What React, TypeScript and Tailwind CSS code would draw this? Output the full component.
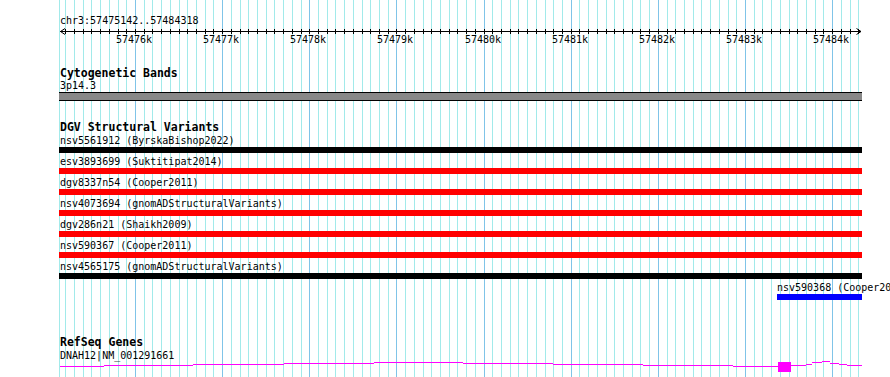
const START = 57475142
const END = 57484318
const X0 = 60.7
const SCALE = 0.08715

const toX = (bp: number) => X0 + (bp - START) * SCALE

type Tick = { bp: number; x: number; major: boolean }

const ticks: Tick[] = []
for (let bp = 57475200; bp <= END; bp += 100) {
  ticks.push({ bp, x: Math.floor(toX(bp)), major: bp % 1000 === 0 })
}

const variants = [
  { name: 'nsv5561912 (ByrskaBishop2022)', color: 'bg-black' },
  { name: 'esv3893699 (Suktitipat2014)', color: 'bg-[#ff0000]' },
  { name: 'dgv8337n54 (Cooper2011)', color: 'bg-[#ff0000]' },
  { name: 'nsv4073694 (gnomADStructuralVariants)', color: 'bg-[#ff0000]' },
  { name: 'dgv286n21 (Shaikh2009)', color: 'bg-[#ff0000]' },
  { name: 'nsv590367 (Cooper2011)', color: 'bg-[#ff0000]' },
  { name: 'nsv4565175 (gnomADStructuralVariants)', color: 'bg-black' },
]

// intron line of the gene, drawn as 1px steps: [x1, x2, row]
const intron: [number, number, number][] = [
  [60, 104, 366], [104, 193, 365], [193, 284, 364], [284, 374, 363],
  [374, 463, 362], [463, 553, 363], [553, 643, 364], [643, 733, 365],
  [733, 778, 366], [791, 806, 365], [806, 812, 364], [812, 822, 362],
  [822, 830, 361], [830, 839, 363], [839, 847, 364], [847, 862, 365],
]

const mono = "font-['DejaVu_Sans_Mono',monospace]"

function Grid() {
  return (
    <svg className="absolute inset-0" width={890} height={377}>
      <rect x={59} y={0} width={1} height={377} fill="#a2eaea" />
      {ticks.map((t) => (
        <rect key={t.bp} x={t.x} y={0} width={1} height={377} fill={t.major ? '#80c4e8' : '#a2eaea'} />
      ))}
    </svg>
  )
}

function Ruler() {
  return (
    <svg className="block" width={890} height={20}>
      <rect x={60} y={4} width={801} height={1} fill="black" />
      <path d="M65 1.5 L60.5 4.5 L65 7.5" stroke="black" fill="none" />
      <path d="M856.5 1.5 L861 4.5 L856.5 7.5" stroke="black" fill="none" />
      {ticks.map((t) => (
        <rect key={t.bp} x={t.x} y={2} width={1} height={5} fill="black" />
      ))}
      {ticks
        .filter((t) => t.major)
        .map((t) => (
          <text
            key={t.bp}
            x={t.x - 1}
            y={16}
            textAnchor="middle"
            fontSize={10}
            fontFamily="'DejaVu Sans Mono', monospace"
            fill="black"
          >
            {t.bp / 1000}k
          </text>
        ))}
    </svg>
  )
}

function Label({ children, className = '' }: { children: React.ReactNode; className?: string }) {
  return <div className={`${mono} text-[10px] leading-[12px] h-[12px] whitespace-nowrap text-black ${className}`}>{children}</div>
}

function Title({ children, className = '' }: { children: React.ReactNode; className?: string }) {
  return <div className={`${mono} text-[11.5px] leading-[13px] h-[13px] font-bold whitespace-nowrap text-black pl-[60px] ${className}`}>{children}</div>
}

function GeneModel() {
  return (
    <svg className="block overflow-visible" width={890} height={15}>
      {intron.map(([x1, x2, row]) => (
        <rect key={x1} x={x1} y={row - 362} width={x2 - x1} height={1} fill="#ff00ff" />
      ))}
      <rect x={778} y={0} width={13} height={10} fill="#ff00ff" />
    </svg>
  )
}

export default function App() {
  return (
    <div className="relative w-[890px] h-[377px] overflow-hidden bg-white">
      <Grid />

      <div className="relative flex flex-col">
        {/* Ruler */}
        <Label className="mt-[15px] pl-[60px]">chr3:57475142..57484318</Label>
        <Ruler />

        {/* Cytogenetic bands */}
        <Title className="mt-[20px]">Cytogenetic Bands</Title>
        <Label className="pl-[60px]">3p14.3</Label>
        <div className="ml-[59px] w-[803px] h-[9px] border-y border-black bg-[#888888]" />

        {/* DGV */}
        <Title className="mt-[20px]">DGV Structural Variants</Title>
        <div className="mt-[1px] flex flex-col gap-[3px]">
          {variants.map((v) => (
            <div key={v.name}>
              <Label className="pl-[60px]">{v.name}</Label>
              <div className={`ml-[59px] w-[803px] h-[6px] ${v.color}`} />
            </div>
          ))}
          <div>
            <Label className="pl-[777px]">nsv590368 (Cooper2011)</Label>
            <div className="ml-[777px] w-[85px] h-[6px] bg-[#0000ff]" />
          </div>
        </div>

        {/* RefSeq */}
        <Title className="mt-[36px]">RefSeq Genes</Title>
        <Label className="mt-[1px] pl-[60px]">DNAH12|NM_001291661</Label>
        <GeneModel />
      </div>
    </div>
  )
}
